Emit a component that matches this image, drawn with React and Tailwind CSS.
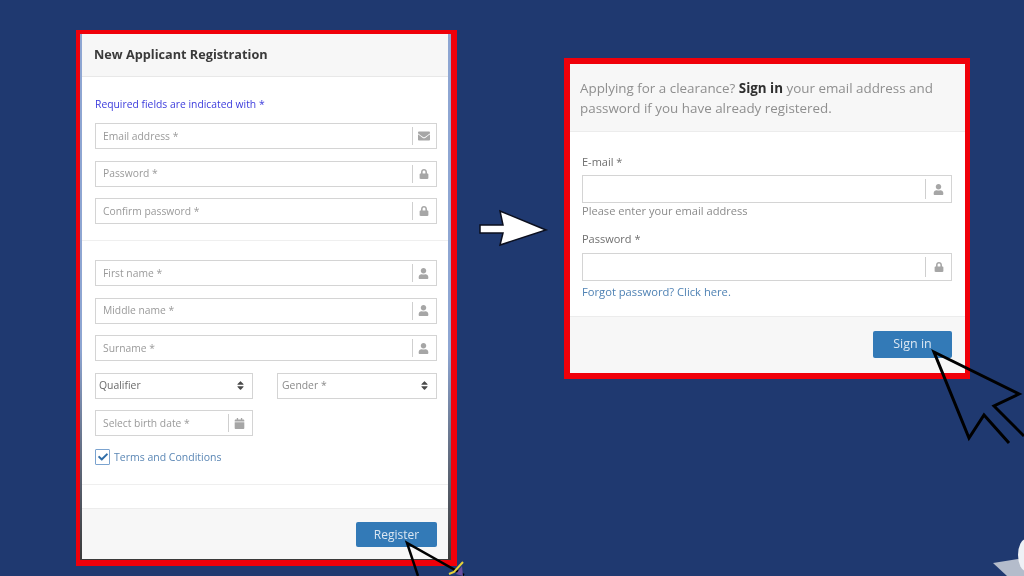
import React from "react";
import { FaEnvelope, FaLock, FaUser, FaCalendar, FaSort, FaCheck } from "react-icons/fa";

function Field({ label, icon: Icon, iconSize = 11, className = "w-full" }) {
  return (
    <div className={`h-[26px] flex items-center border border-[#d4d4d4] bg-white ${className}`}>
      <span className="flex-1 pl-[7px] pt-[1px] text-[10.3px] text-[#9a9a9a]">{label}</span>
      {Icon ? (
        <span className="w-[24px] h-[18px] border-l border-[#cfcfcf] pr-[2px] flex items-center justify-center text-[#a6a6a6]">
          <Icon size={iconSize} />
        </span>
      ) : null}
    </div>
  );
}

function SelectBox({ label, color, width, pad }) {
  return (
    <div className={`h-[26px] flex items-center justify-between border border-[#d4d4d4] bg-white pr-[6px] ${pad} ${width}`}>
      <span className={`pt-[1px] text-[10.4px] ${color}`}>{label}</span>
      <FaSort size={11} className="text-[#4a4a4a]" />
    </div>
  );
}

function InputRow({ icon: Icon, size }) {
  return (
    <div className="h-[28px] flex items-center justify-end border border-[#d4d4d4] bg-white">
      <span className="w-[26px] h-[20px] border-l border-[#cfcfcf] flex items-center justify-center text-[#a6a6a6]">
        <Icon size={size} />
      </span>
    </div>
  );
}

export default function App() {
  return (
    <div className="relative w-[1024px] h-[576px] overflow-hidden bg-[#1f3970] flex items-start pl-[76px] blur-[0.45px]" style={{ fontFamily: '"Open Sans", sans-serif' }}>
      {/* Registration card */}
      <div className="mt-[30px] w-[381px] h-[536px] shrink-0 border-t-[4px] border-l-[4px] border-r-[6px] border-b-[6px] border-[#f0000a]">
        <div className="h-full pl-[2px] pr-[3px] pb-[1px] bg-gradient-to-b from-[#8ea6d2] from-60% to-[#3a3a3a]">
          <div className="h-full flex flex-col bg-white">
            <div className="h-[43px] shrink-0 flex items-center pl-[12px] bg-[#f7f7f7] border-b border-[#e8e8e8]">
              <span className="text-[12.7px] font-bold text-[#3a3a3a]">New Applicant Registration</span>
            </div>
            <div className="flex-1 flex flex-col pl-[13px] pr-[11px]">
              <p className="mt-[19px] mb-[11px] h-[16px] leading-[16px] text-[10.35px] text-[#3b3bdc]">Required fields are indicated with *</p>
              <div className="flex flex-col gap-[11.5px]">
                <Field label="Email address *" icon={FaEnvelope} iconSize={12} />
                <Field label="Password *" icon={FaLock} iconSize={10} />
                <Field label="Confirm password *" icon={FaLock} iconSize={10} />
              </div>
              <div className="mt-[16px] mb-[19px] -ml-[13px] -mr-[11px] border-t border-[#efefef]" />
              <div className="flex flex-col gap-[11.5px]">
                <Field label="First name *" icon={FaUser} />
                <Field label="Middle name *" icon={FaUser} />
                <Field label="Surname *" icon={FaUser} />
                <div className="flex justify-between">
                  <SelectBox label="Qualifier" color="text-[#6a6a6a]" width="w-[158px]" pad="pl-[3px]" />
                  <SelectBox label="Gender *" color="text-[#8a8a8a]" width="w-[160px]" pad="pl-[4px]" />
                </div>
                <Field label="Select birth date *" icon={FaCalendar} iconSize={11} className="w-[158px]" />
              </div>
              <div className="mt-[13px] h-[16px] flex items-center gap-[4px]">
                <span className="w-[15px] h-[16px] border border-[#7ba3cf] rounded-[1px] flex items-center justify-center text-[#2f6da8]">
                  <FaCheck size={10} />
                </span>
                <span className="pt-[1px] text-[10.5px] text-[#5b87b5]">Terms and Conditions</span>
              </div>
              <div className="mt-[19px] -ml-[13px] -mr-[11px] border-t border-[#efefef]" />
            </div>
            <div className="h-[51px] shrink-0 flex justify-end pt-[13px] pr-[11px] bg-[#f7f7f7] border-t border-[#ececec]">
              <div className="w-[81px] h-[25px] rounded-[2px] bg-[#337ab7] flex items-center justify-center text-[12px] text-[#dbe7f2]">Register</div>
            </div>
          </div>
        </div>
      </div>

      {/* Sign-in card */}
      <div className="mt-[58px] ml-[107px] w-[406px] h-[321px] shrink-0 border-t-[6px] border-l-[6px] border-r-[5px] border-b-[6px] border-[#f0000a]">
        <div className="h-full flex flex-col bg-white">
          <div className="h-[68px] shrink-0 bg-[#f7f7f7] border-b border-[#ececec] pl-[10px] pr-[20px] pt-[14px]">
            <p className="text-[13.4px] leading-[20px] text-[#8f8f8f]">
              Applying for a clearance? <b className="text-[#2f2f2f] font-bold">Sign in</b> your email address and password if you have already registered.
            </p>
          </div>
          <div className="flex-1 pl-[12px] pr-[13px] pt-[21px]">
            <p className="h-[17px] mb-[5px] leading-[17px] text-[11px] text-[#6f6f6f]">E-mail *</p>
            <InputRow icon={FaUser} size={11} />
            <p className="h-[16px] leading-[16px] text-[11.1px] text-[#8a8a8a]">Please enter your email address</p>
            <p className="mt-[11px] h-[17px] mb-[6px] leading-[17px] text-[11px] text-[#6f6f6f]">Password *</p>
            <InputRow icon={FaLock} size={10} />
            <p className="mt-[3px] h-[16px] leading-[16px] text-[11.2px] text-[#4f82b4]">Forgot password? Click here.</p>
          </div>
          <div className="h-[57px] shrink-0 flex justify-end pt-[14px] pr-[13px] bg-[#f7f7f7] border-t border-[#ececec]">
            <div className="w-[79px] h-[27px] rounded-[2px] bg-[#337ab7] flex items-center justify-center text-[12.5px] text-[#dbe7f2]">Sign in</div>
          </div>
        </div>
      </div>

      {/* Overlay drawings: arrow, cursors, figure */}
      <svg className="absolute left-0 top-0 pointer-events-none" width="1024" height="576" viewBox="0 0 1024 576" fill="none">
        <polygon points="546,230 500,211 503,225 480,225 480,233 503,233 500,245" fill="#ffffff" stroke="#0b0f1e" strokeWidth="1.5" strokeLinejoin="miter" />
        <polyline points="1009,443 984,415 969,438 934,352 1019,394 994,406 1024,436" stroke="#000000" strokeWidth="3" />
        <polyline points="464,575 407,543 418,576" stroke="#000000" strokeWidth="2.5" />
        <path d="M449,574 L454,572 L463,562" stroke="#e6d23a" strokeWidth="2" />
        <path d="M456,574 L462,566 L463,576 Z" fill="#6a4fa0" />
        <polygon points="993,563 1018,559 1024,560 1024,576 1007,576" fill="#b4bccb" />
        <ellipse cx="1026" cy="555" rx="8" ry="16" fill="#eef1f6" />
      </svg>
    </div>
  );
}
